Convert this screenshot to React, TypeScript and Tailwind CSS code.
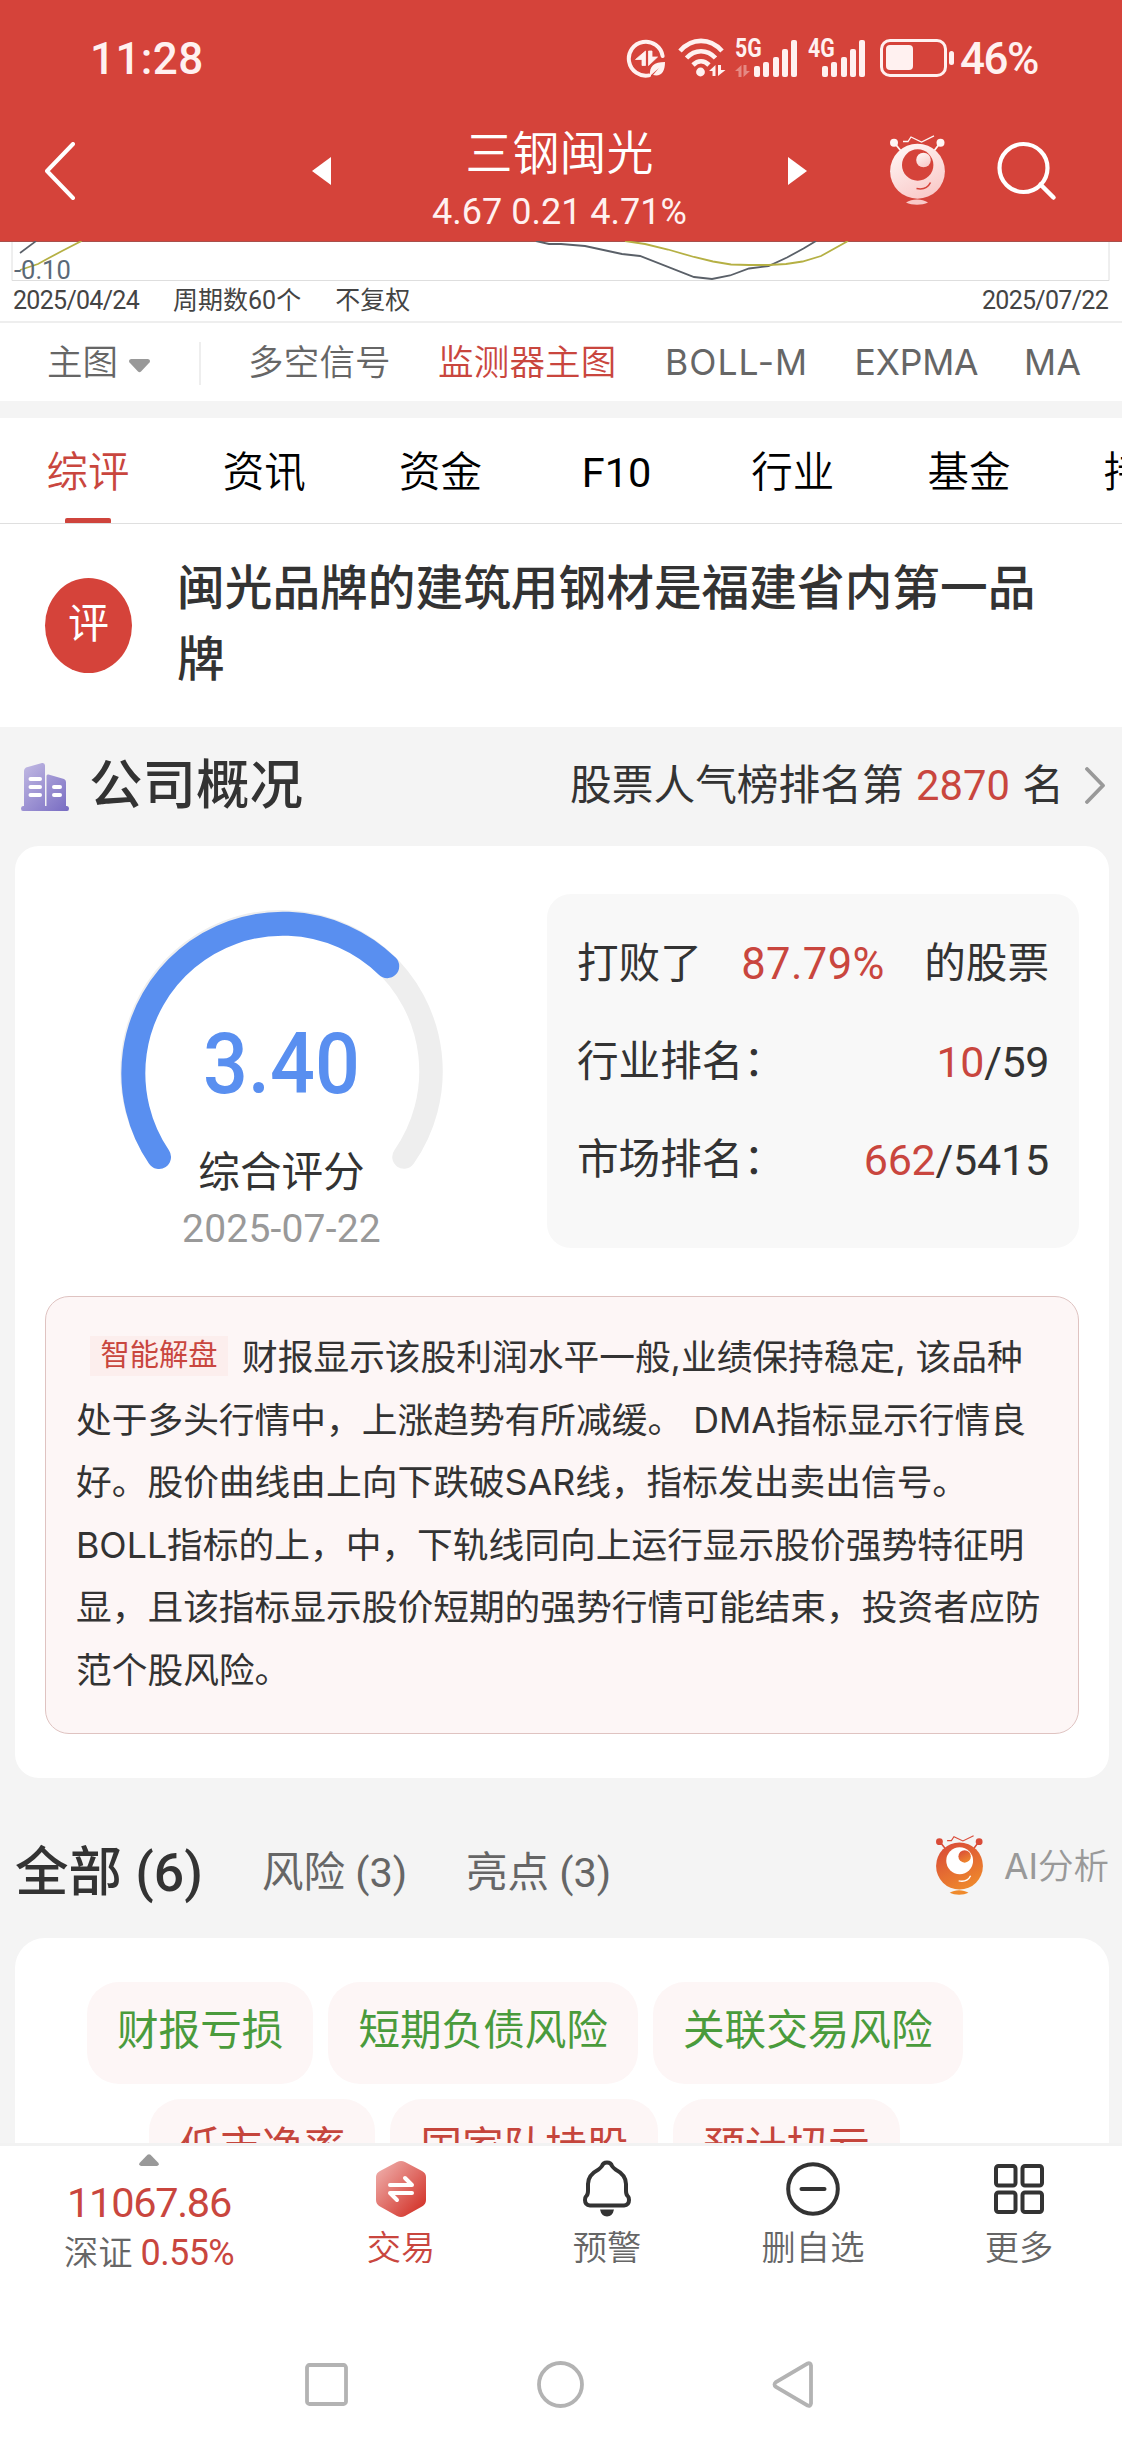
import { useState } from 'react';

const INDICATORS = [
    { name: '多空信号', className: 'w-[190px] tracking-[0.2px]' },
    { name: '监测器主图', className: 'w-[227px] tracking-[0.2px]' },
    { name: 'BOLL-M', className: 'w-[189.5px] font-normal tracking-[1px]' },
    { name: 'EXPMA', className: 'w-[169.5px] font-normal tracking-[-0.2px]' },
    { name: 'MA', className: 'w-[62px] font-normal tracking-[0.5px]' },
];

const TABS = ['综评', '资讯', '资金', 'F10', '行业', '基金', '持仓'];

const ANALYSIS_LINES = [
    '处于多头行情中，上涨趋势有所减缓。 DMA指标显示行情良',
    '好。股价曲线由上向下跌破SAR线，指标发出卖出信号。',
    'BOLL指标的上，中，下轨线同向上运行显示股价强势特征明',
    '显，且该指标显示股价短期的强势行情可能结束，投资者应防',
    '范个股风险。',
];

const RISKS = ['财报亏损', '短期负债风险', '关联交易风险'];
const HIGHLIGHTS = ['低市净率', '国家队持股', '预计扭亏'];

export default function App() {
    return (
        <div className="flex h-[2442px] w-[1122px] flex-col overflow-hidden bg-[#f4f4f4] font-['Roboto','Noto_Sans_CJK_SC',sans-serif] text-[#333]">
            <header className="h-[241px] shrink-0 bg-[#d5433a] text-white">
                <StatusBar />
                <TitleBar />
            </header>
            <ChartFooter />
            <IndicatorBar />
            <TabBar />
            <ReviewBanner />
            <CompanyHeading />
            <CompanyCard />
            <TagSection />
            <BottomBar />
            <SystemNav />
        </div>
    );
}

function StatusBar() {
    return (
        <div className="flex h-[116px] items-center pl-[90px] text-[#fff1f0]">
            <span className="mt-[2px] w-[536px] text-[44px] leading-none font-medium tracking-[0.400px]">11:28</span>

            {/* data saver */}
            <svg width="40" height="40" viewBox="0 0 40 40" fill="none" className="mt-[2px]">
                <path d="M23 36.4A17 17 0 1 1 36.6 17" stroke="currentColor" strokeWidth="4" strokeLinecap="round" />
                <path d="M19.500 12v14.500h-3.500v-6H9.500zM22.500 26.500V12H26v6h5.500z" fill="currentColor" stroke="currentColor" strokeWidth=".800" strokeLinejoin="round" />
                <path d="M24 37c-1-10 4-14 15-14 0 10-4 15-12 13l6-7-9 8z" fill="currentColor" />
            </svg>

            {/* wifi */}
            <svg width="50" height="40" viewBox="0 0 50 40" fill="none" className="ml-[11px]">
                <path d="M3 13C15-.5 33-.5 45 13" stroke="currentColor" strokeWidth="4.600" />
                <path d="M9.500 20c8.500-9 20.500-9 29 0" stroke="currentColor" strokeWidth="4.600" />
                <path d="M16 27c5-5 11-5 16 0" stroke="currentColor" strokeWidth="4.600" />
                <circle cx="23.500" cy="34" r="4.400" fill="currentColor" />
                <path d="M38.500 27v11h-3v-5H32zM41 38V27h3v5h4.500z" fill="currentColor" />
            </svg>

            <Signal label="5G" dimArrows />
            <Signal label="4G" />

            {/* battery */}
            <div className="ml-[15px] h-[38px] w-[67px] rounded-[10px] border-[3.500px] border-current p-[3px]">
                <div className="h-[25px] w-[27px] rounded-[4px] bg-current" />
            </div>
            <div className="ml-[2px] h-[14px] w-[5px] rounded-full bg-current" />
            <span className="mt-[2px] ml-[6px] text-[44px] leading-none font-medium tracking-[-1.500px]">46%</span>
        </div>
    );
}

function Signal({ label, dimArrows = false }: { label: string; dimArrows?: boolean }) {
    return (
        <div className={`relative h-[38px] ${dimArrows ? 'ml-[8px] w-[62px]' : 'ml-[11px] w-[57px]'}`}>
            <span className="absolute -top-[2px] left-0 origin-left scale-x-[0.85] text-[25px] leading-[24px] font-bold">
                {label}
            </span>
            {dimArrows && (
                <svg width="15" height="12" viewBox="0 0 15 12" className="absolute bottom-0 left-0 opacity-40">
                    <path d="M6.500 0v12h-3V6H0zM8.500 12V0h3v6H15z" fill="currentColor" />
                </svg>
            )}
            <div className="absolute right-0 bottom-0 flex items-end gap-[3.250px]">
                <i className="h-[11px] w-[6px] rounded-[2px] bg-current" />
                <i className="h-[15px] w-[6px] rounded-[2px] bg-current" />
                <i className="h-[20px] w-[6px] rounded-[2px] bg-current" />
                <i className="h-[28px] w-[6px] rounded-[2px] bg-current" />
                <i className="h-[37px] w-[6px] rounded-[2px] bg-current" />
            </div>
        </div>
    );
}

function TitleBar() {
    return (
        <div className="flex h-[125px] items-start pl-[45px]">
            <svg width="30" height="58" viewBox="0 0 30 58" fill="none" className="mt-[26px]">
                <path d="M28 2L2 29l26 27" stroke="currentColor" strokeWidth="4" strokeLinecap="round" strokeLinejoin="round" />
            </svg>
            <svg width="19" height="28" viewBox="0 0 19 28" className="mt-[41px] ml-[237px]">
                <path d="M19 0v28L0 14z" fill="currentColor" />
            </svg>
            <div className="w-[457px] text-center">
                <h1 className="mt-[13px] text-[47px] leading-[50px] font-[350]">三钢闽光</h1>
                <p className="mt-[12px] text-[36px] leading-[42px] text-[#fff1f0]">4.67 0.21 4.71%</p>
            </div>
            <svg width="19" height="28" viewBox="0 0 19 28" className="mt-[41px]">
                <path d="M0 0v28l19-14z" fill="currentColor" />
            </svg>
            <Mascot id="pale" from="#fff6f5" to="#f9c9c8" eye="#d5433a" className="mt-[19px] ml-[83px] h-[70px] w-[55px]" />
            <svg width="60" height="60" viewBox="0 0 60 60" fill="none" className="mt-[25px] ml-[52px]">
                <circle cx="26.500" cy="27" r="24" stroke="currentColor" strokeWidth="4.200" />
                <path d="M43.500 43.500L56.500 56.500" stroke="currentColor" strokeWidth="4.500" strokeLinecap="round" />
            </svg>
        </div>
    );
}

type MascotProps = { id: string; from: string; to: string; eye: string; className: string };

// One-eyed robot with two antennae, used in the title bar and next to "AI分析"
function Mascot({ id, from, to, eye, className }: MascotProps) {
    return (
        <svg viewBox="0 0 55 70" preserveAspectRatio="none" fill="none" className={className}>
            <defs>
                <linearGradient id={id} x1="0.200" y1="0" x2="0.700" y2="1">
                    <stop stopColor={from} />
                    <stop offset="1" stopColor={to} />
                </linearGradient>
            </defs>
            <path d="M4.500 8l6.500 8M50 8l-6 8" stroke={from} strokeWidth="1.800" />
            <path d="M13 6.500h5l3-4.500L31.500 7 44 .8" stroke={from} strokeWidth="1.300" />
            <circle cx="4" cy="7.800" r="4" fill={from} />
            <circle cx="50.500" cy="7.800" r="4" fill={from} />
            <ellipse cx="27.500" cy="36.200" rx="27.400" ry="27.500" fill={`url(#${id})`} />
            <circle cx="27.700" cy="30" r="15.700" fill={eye} />
            <circle cx="33.500" cy="25" r="7.300" fill={`url(#${id})`} />
            <path d="M26.500 53.500c7 1.500 11.500-1 14-6" stroke={eye} strokeWidth="1.600" />
            <path d="M16 67.500c6-4 16-4 22 0-6 3-16 3-22 0z" fill={to} />
        </svg>
    );
}

function ChartFooter() {
    return (
        <div className="h-[82px] shrink-0 border-b-2 border-[#eee] bg-white text-[#444]">
            <div className="relative h-[41px]">
                <svg width="1122" height="41" viewBox="0 0 1122 41" fill="none">
                    <path d="M12 0v39.500h1097V0" stroke="#dedede" />
                    <path d="M0 .5h1122" stroke="#a8504c" />
                    <path d="M36 0L20 12" stroke="#5a6068" strokeWidth="1.600" />
                    <path d="M81.500 0L62 10 47 18l-9 5-18 6" stroke="#b5b044" strokeWidth="1.800" />
                    <path
                        d="M536 0l13 3h12l24 2 37 8 18 2 54 21 18 2 18-3.500 19-7 19.500-2.500 18.500-8.500 16.500-9L816 0"
                        stroke="#5a6068"
                        strokeWidth="1.800"
                    />
                    <path
                        d="M625 0l20 3 23 5.500 26 7.500 19 4.500 18 3 18 .5h19.500l17.500-1 16.500-2.500L821 15l27-15"
                        stroke="#b5b044"
                        strokeWidth="1.800"
                    />
                </svg>
                <span className="absolute top-[16px] left-[14px] text-[25.500px] leading-[26px] text-[#5b6977]">-0.10</span>
            </div>
            <div className="flex h-[37px] items-center pr-[14px] pl-[13px] text-[25px] leading-none">
                <span className="tracking-[-0.700px]">2025/04/24</span>
                <span className="ml-[34px]">周期数60个</span>
                <span className="ml-[34px]">不复权</span>
                <span className="ml-auto tracking-[-0.700px]">2025/07/22</span>
            </div>
        </div>
    );
}

function IndicatorBar() {
    const [active, setActive] = useState('监测器主图');

    return (
        <div className="flex h-[78px] shrink-0 items-center overflow-hidden bg-white pt-[2px] pl-[47px] font-['Inter','Noto_Sans_CJK_SC',sans-serif] text-[35.500px] leading-none font-[350] whitespace-nowrap text-[#666]">
            <span>主图</span>
            <svg width="21" height="14" viewBox="0 0 21 14" className="mt-[6px] ml-[11px]">
                <path d="M2 0h17q3 1 1.500 3.500l-8.500 9q-1.500 1.500-3 0L.5 3.500Q-1 1 2 0z" fill="#999" />
            </svg>
            <span className="mr-[47px] ml-[49px] h-[43px] w-[2px] bg-[#eee]" />
            {INDICATORS.map((item) => (
                <button
                    key={item.name}
                    type="button"
                    onClick={() => setActive(item.name)}
                    className={`shrink-0 text-left ${item.className} ${active === item.name ? 'text-[#c9463e]' : ''}`}
                >
                    {item.name}
                </button>
            ))}
        </div>
    );
}

function TabBar() {
    const [active, setActive] = useState('综评');

    return (
        <nav className="mt-[17px] flex h-[106px] shrink-0 overflow-hidden border-b border-[#dfdfdf] bg-white">
            {TABS.map((tab) => (
                <button
                    key={tab}
                    type="button"
                    onClick={() => setActive(tab)}
                    className={`relative w-[176.200px] shrink-0 text-[41.500px] leading-[109px] ${tab === 'F10' ? 'font-normal' : 'font-[350]'} ${active === tab ? 'text-[#c9463e]' : 'text-black'}`}
                >
                    {tab}
                    {active === tab && (
                        <span className="absolute bottom-[-1px] left-[65px] h-[6px] w-[46px] rounded-[2px] bg-[#cf443c]" />
                    )}
                </button>
            ))}
        </nav>
    );
}

function ReviewBanner() {
    return (
        <div className="flex h-[203px] shrink-0 bg-white pl-[45px]">
            <div className="mt-[54px] h-[95px] w-[87px] rounded-[50%] bg-[#d5433a] text-center text-[41px] leading-[93px] text-white">
                评
            </div>
            <h2 className="mt-[30px] ml-[45px] w-[880px] text-[47.700px] leading-[71px] font-medium">
                闽光品牌的建筑用钢材是福建省内第一品牌
            </h2>
        </div>
    );
}

function CompanyHeading() {
    return (
        <div className="flex h-[119px] shrink-0 items-center pb-[3px] pl-[21px]">
            <svg width="48" height="50" viewBox="0 0 48 50" className="mt-[3px]">
                <defs>
                    <linearGradient id="building" x1="0" y1="0" x2="1" y2="1">
                        <stop stopColor="#c4bce4" />
                        <stop offset="1" stopColor="#776bc2" />
                    </linearGradient>
                </defs>
                <path
                    d="M3 9q0-2.500 2-3.500L21 1q3-.5 3 2.500V44h1.500V14q0-2 2-1.500L43 17q2 1 2 3v24h1q2 0 2 2.500T46 49H2q-2 0-2-2.500T2 44h1z"
                    fill="url(#building)"
                />
                <path
                    d="M9.500 17h9.500M9.500 25h9.500M9.500 33h9.500M33 25h6M33 33h6"
                    stroke="#fff"
                    strokeWidth="4"
                    strokeLinecap="round"
                />
            </svg>
            <h2 className="mt-[2px] ml-[20px] text-[53.500px] leading-none font-medium">公司概况</h2>
            <div className="mt-[1px] ml-auto flex items-center text-[41.700px] leading-none">
                <span>股票人气榜排名第</span>
                <span className="mx-[12.500px] text-[#c9463e]">2870</span>
                <span>名</span>
            </div>
            <svg width="21" height="37" viewBox="0 0 21 37" fill="none" className="mr-[16px] ml-[21px]">
                <path d="M2 2l16 16.500L2 35" stroke="#999" strokeWidth="3.800" strokeLinecap="round" strokeLinejoin="round" />
            </svg>
        </div>
    );
}

function CompanyCard() {
    return (
        <section className="mr-[13px] ml-[15px] h-[932px] shrink-0 rounded-[24px] bg-white px-[30px] pt-[48px]">
            <div className="flex">
                <ScoreGauge />
                <div className="mr-0 ml-auto flex h-[354px] w-[532px] flex-col rounded-[24px] bg-[#f8f8f8] px-[30px] pt-[21px] text-[41.600px]">
                    <div className="flex h-[98.500px] items-center justify-between">
                        <span>打败了</span>
                        <span className="text-[43.500px] tracking-[0.400px] text-[#c9463e]">87.79%</span>
                        <span>的股票</span>
                    </div>
                    <div className="flex h-[98px] items-center justify-between">
                        <span>行业排名：</span>
                        <span className="text-[43px] tracking-[-0.400px]"><b className="font-normal text-[#c9463e]">10</b>/59</span>
                    </div>
                    <div className="flex h-[98px] items-center justify-between">
                        <span>市场排名：</span>
                        <span className="text-[43px] tracking-[-0.200px]"><b className="font-normal text-[#c9463e]">662</b>/5415</span>
                    </div>
                </div>
            </div>

            <div className="mt-[48px] h-[438px] w-[1034px] rounded-[24px] border border-[#dfc3c1] bg-[#fdf6f6] pt-[29px] pl-[30px] font-['Inter','Noto_Sans_CJK_SC',sans-serif] text-[35.730px] leading-[62.500px] whitespace-nowrap">
                <div className="flex">
                    <span className="mt-[10px] mr-[14px] ml-[14px] h-[40px] w-[138px] bg-[#fceeed] text-center text-[29.300px] leading-[37px] text-[#c9463e]">
                        智能解盘
                    </span>
                    <span>财报显示该股利润水平一般,业绩保持稳定, 该品种</span>
                </div>
                {ANALYSIS_LINES.map((line) => (
                    <p key={line}>{line}</p>
                ))}
            </div>
        </section>
    );
}

function ScoreGauge() {
    return (
        <div className="relative mt-[16px] ml-[75px] h-[338px] w-[323px] text-center">
            <svg width="323" height="262" viewBox="0 0 323 262" fill="none" className="absolute top-0 left-0 overflow-visible">
                <path d="M39 247A149.500 149.500 0 1 1 284 247" stroke="#eee" strokeWidth="23.500" strokeLinecap="round" />
                <path d="M39 247A149.500 149.500 0 0 1 267.200 56.200" stroke="#598ff0" strokeWidth="24" strokeLinecap="round" />
            </svg>
            <div className="relative pt-[104px]">
                <div className="scale-x-[0.930] text-[85px] leading-[100px] font-medium text-[#598ff0]">3.40</div>
                <div className="mt-[34px] text-[41.600px] leading-[50px]">综合评分</div>
                <div className="mt-[6px] text-[39px] leading-[50px] tracking-[0.200px] text-[#999]">2025-07-22</div>
            </div>
        </div>
    );
}

function TagSection() {
    return (
        <section className="flex h-[365px] shrink-0 flex-col overflow-hidden">
            <div className="flex h-[160px] shrink-0 items-center pl-[15px] leading-none whitespace-nowrap">
                <span className="mt-[30px] w-[247px] text-[53.500px] font-medium">全部 (6)</span>
                <span className="mt-[30px] w-[204px] text-[41.500px] text-[#666]">风险 (3)</span>
                <span className="mt-[30px] text-[41.500px] text-[#666]">亮点 (3)</span>
                <Mascot id="orange" from="#d94b38" to="#ef8a2c" eye="#fff" className="mt-[13px] ml-auto h-[60px] w-[47px]" />
                <span className="mt-[17px] mr-[13px] ml-[21px] font-['Inter','Noto_Sans_CJK_SC',sans-serif] text-[35.500px] font-[350] text-[#999]">
                    <span className="font-normal">AI</span>分析
                </span>
            </div>
            <div className="mr-[13px] ml-[15px] h-[240px] shrink-0 rounded-t-[30px] bg-white pt-[44px] text-[41.600px] leading-[98px]">
                <div className="flex gap-[15px] pl-[72px] text-[#4a9b3c]">
                    {RISKS.map((tag) => (
                        <span key={tag} className="h-[102px] rounded-[32px] bg-[#fdf6f6] px-[30px]">{tag}</span>
                    ))}
                </div>
                <div className="mt-[15px] flex gap-[15px] pl-[134px] text-[#c5453c]">
                    {HIGHLIGHTS.map((tag) => (
                        <span key={tag} className="h-[102px] rounded-[32px] bg-[#fdf6f6] px-[30px]">{tag}</span>
                    ))}
                </div>
            </div>
        </section>
    );
}

function BottomBar() {
    return (
        <footer className="grid h-[160px] shrink-0 grid-cols-[298px_206px_206px_206px_206px] border-t-[3px] border-[#f2f2f2] bg-white text-[34.300px] leading-[40px] font-[350] text-[#666]">
            <div className="flex flex-col items-center text-[#c9463e]">
                <svg width="20" height="12" viewBox="0 0 20 12" className="mt-[8px]">
                    <path d="M8.500.8q1.500-1.200 3 0l8 8.200q1 2.500-1.500 3H2Q-.5 11.500.5 9z" fill="#999" />
                </svg>
                <div className="mt-[16px] text-[41.500px] leading-[42px] font-normal tracking-[-1.300px]">11067.86</div>
                <div className="mt-[9px] flex text-[36px]">
                    <span className="text-[34.300px] text-[#666]">深证</span>
                    <span className="ml-[8px] font-normal tracking-[-0.600px]">0.55%</span>
                </div>
            </div>

            <div className="flex flex-col items-center text-[#c9463e]">
                <svg width="52" height="58" viewBox="0 0 52 58" fill="none" className="mt-[14px]">
                    <defs>
                        <linearGradient id="trade" x1="0" y1="0" x2="1" y2="1">
                            <stop offset="0.100" stopColor="#eda8a4" />
                            <stop offset="0.850" stopColor="#d53c33" />
                        </linearGradient>
                    </defs>
                    <path d="M22 2q4-2 8 0l17 9q4 2 4 6v23q0 4-4 6.500L30 56q-4 2-8 0L5 46.500Q1 44 1 40V17q0-4 4-6z" fill="url(#trade)" />
                    <path d="M15 25h22l-7-7M37 33H15l7 7" stroke="#fff" strokeWidth="4" strokeLinecap="round" strokeLinejoin="round" />
                </svg>
                <span className="mt-[10px]">交易</span>
            </div>

            <div className="flex flex-col items-center">
                <svg width="48" height="58" viewBox="0 0 48 58" fill="none" stroke="#333" strokeWidth="4" strokeLinejoin="round" className="mt-[14px]">
                    <path d="M19 6q1-3.500 5-3.500T29 6q1 1.500 3.500 3.500Q43 15 43 24v7q0 4 2 5.500 1 1 1 3.500 0 5-5 5.500H7Q2 45 2 40q0-2.500 1-3.500Q5 35 5 31v-7Q5 15 15.500 9.500 18 7.500 19 6z" />
                    <path d="M17 49.500h14q-1.500 7-7 7t-7-7z" fill="#333" stroke="none" />
                </svg>
                <span className="mt-[10px]">预警</span>
            </div>

            <div className="flex flex-col items-center">
                <svg width="54" height="54" viewBox="0 0 54 54" fill="none" stroke="#333" strokeWidth="4" strokeLinecap="round" className="mt-[16px]">
                    <circle cx="27" cy="27" r="24.800" />
                    <path d="M15.500 27h23" />
                </svg>
                <span className="mt-[12px]">删自选</span>
            </div>

            <div className="flex flex-col items-center">
                <svg width="50" height="50" viewBox="0 0 50 50" fill="none" stroke="#333" strokeWidth="4" className="mt-[18px]">
                    <rect x="2" y="2" width="19.500" height="19.500" rx="2.500" />
                    <rect x="28.500" y="2" width="19.500" height="19.500" rx="2.500" />
                    <rect x="2" y="28.500" width="19.500" height="19.500" rx="2.500" />
                    <rect x="28.500" y="28.500" width="19.500" height="19.500" rx="2.500" />
                </svg>
                <span className="mt-[14px]">更多</span>
            </div>
        </footer>
    );
}

function SystemNav() {
    return (
        <div className="flex h-[139px] shrink-0 items-center bg-white pt-[23px] pl-[305px]">
            <svg width="43" height="43" viewBox="0 0 43 43" fill="none">
                <rect x="2" y="2" width="39" height="39" rx="2.500" stroke="#b3b3b3" strokeWidth="3.800" />
            </svg>
            <svg width="47" height="47" viewBox="0 0 47 47" fill="none" className="ml-[189px]">
                <circle cx="23.500" cy="23.500" r="21.500" stroke="#b3b3b3" strokeWidth="3.800" />
            </svg>
            <svg width="41" height="47" viewBox="0 0 41 47" fill="none" className="ml-[188px]">
                <path d="M39 4.500v38q-.5 3-3.500 2L4 26q-3-2.500 0-5L35.500 2.500Q38.500 1.500 39 4.500z" stroke="#b3b3b3" strokeWidth="3.800" />
            </svg>
        </div>
    );
}
